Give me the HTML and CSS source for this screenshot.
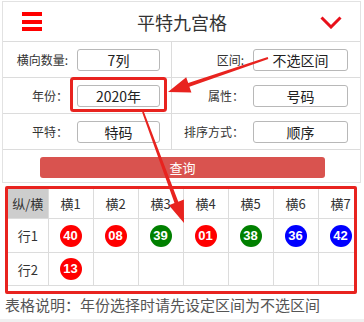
FILE: index.html
```html
<!DOCTYPE html>
<html lang="zh-CN">
<head>
  <meta charset="UTF-8" />
  <title>平特九宫格</title>
  <link rel="stylesheet" href="styles.css">
</head>
<body>
  <div class="panel">
    <div class="topbar">
      <div class="menu"><span></span><span></span><span></span></div>
      <div class="title">平特九宫格</div>
      <svg class="chevron" width="22" height="13" viewBox="0 0 22 13">
        <polyline points="1.5,1.5 11,11 20.5,1.5" fill="none" stroke="#e8101a" stroke-width="3" />
      </svg>
    </div>

    <div class="form">
      <div class="field left">
        <label>横向数量:</label>
        <div class="box">7列</div>
      </div>
      <div class="field right">
        <label>区间:</label>
        <div class="box">不选区间</div>
      </div>
      <div class="field left">
        <label>年份：</label>
        <div class="box">2020年</div>
      </div>
      <div class="field right">
        <label>属性：</label>
        <div class="box">号码</div>
      </div>
      <div class="field left">
        <label>平特：</label>
        <div class="box">特码</div>
      </div>
      <div class="field right">
        <label>排序方式：</label>
        <div class="box">顺序</div>
      </div>
    </div>

    <div class="actions">
      <button class="query">查询</button>
    </div>
  </div>

  <div class="grid-box">
    <table class="grid">
      <colgroup>
        <col class="col-head">
        <col><col><col><col><col><col><col>
      </colgroup>
      <thead>
        <tr>
          <th class="corner">纵/横</th>
          <th>横1</th>
          <th>横2</th>
          <th>横3</th>
          <th>横4</th>
          <th>横5</th>
          <th>横6</th>
          <th>横7</th>
        </tr>
      </thead>
      <tbody>
        <tr>
          <td>行1</td>
          <td><span class="ball red">40</span></td>
          <td><span class="ball red">08</span></td>
          <td><span class="ball green">39</span></td>
          <td><span class="ball red">01</span></td>
          <td><span class="ball green">38</span></td>
          <td><span class="ball blue">36</span></td>
          <td><span class="ball blue">42</span></td>
        </tr>
        <tr>
          <td>行2</td>
          <td><span class="ball red">13</span></td>
          <td></td>
          <td></td>
          <td></td>
          <td></td>
          <td></td>
          <td></td>
        </tr>
      </tbody>
    </table>
  </div>

  <p class="note">表格说明：年份选择时请先设定区间为不选区间</p>
  <div class="bottom-bar"></div>

  <!-- annotation marks drawn over the page -->
  <svg class="marks" width="364" height="322" viewBox="0 0 364 322">
    <rect x="71.5" y="78.5" width="94" height="32" rx="2" fill="none" stroke="#e8231f" stroke-width="3" />
    <polygon fill="#e8231f" points="267.7,57.1 188.2,83.0 186.2,77.3 168,92 191.4,92.5 189.4,86.8 268.3,58.9" />
    <polygon fill="#e8231f" points="142.1,112.3 174.5,203.1 168.9,205.2 184,223 183.9,199.6 178.3,201.7 143.9,111.7" />
  </svg>
</body>
</html>
```

FILE: styles.css
```css
body {
  margin: 0;
  position: relative;
  font-family: "Noto Sans CJK SC", "Microsoft YaHei", sans-serif;
  color: #333;
  background-color: white;
}

.panel {
  margin: 1px 3px 0 2px;
  border: 1px solid #e2e2e2;
}

.topbar {
  display: grid;
  grid-template-columns: 1fr auto 1fr;
  align-items: center;
  height: 39px;
  padding: 0 18px 0 19px;
  border-bottom: 1px solid #dcdcdc;
}

.menu {
  display: flex;
  flex-direction: column;
  justify-content: space-between;
  width: 20px;
  height: 19px;
}

.menu span {
  display: block;
  height: 4px;
  background-color: #f00;
}

.title {
  font-size: 18px;
  color: #333;
}

.chevron {
  justify-self: end;
  margin-top: 2px;
}

.form {
  display: grid;
  grid-template-columns: 169px 1fr;
}

.field {
  display: flex;
  align-items: center;
  gap: 9px;
  height: 35px;
  border-bottom: 1px solid #dcdcdc;
  font-size: 12px;
}

.field.left {
  border-right: 1px solid #dcdcdc;
}

.field label {
  text-align: right;
  white-space: nowrap;
}

.field.left label { width: 65px; }
.field.right label { width: 72px; }

.box {
  box-sizing: border-box;
  height: 22px;
  line-height: 20px;
  border: 1px solid #b8b8b8;
  border-radius: 3px;
  text-align: center;
  font-size: 14px;
  color: #222;
}

.field.left .box { width: 83px; }
.field.right .box { width: 95px; }

.actions {
  padding: 7px 0 4px 37px;
}

.query {
  display: block;
  width: 285px;
  height: 21px;
  padding: 0;
  border: none;
  border-radius: 3px;
  background-color: #d9534f;
  color: white;
  font-family: inherit;
  font-size: 13px;
  line-height: 21px;
}

.grid-box {
  margin: 3px 7px 0 5px;
  border: 3px solid #e8231f;
  border-radius: 2px;
  padding-bottom: 5px;
  overflow: hidden;
}

.grid {
  width: 355px;
  border-collapse: collapse;
  table-layout: fixed;
}

.grid col { width: 45px; }
.grid col.col-head { width: 40px; }

.grid th, .grid td {
  padding: 0;
  border: 1px solid #dcdcdc;
  text-align: center;
  font-size: 13px;
  font-weight: normal;
  color: #333;
}

.grid thead tr:first-child th { border-top: none; }
.grid tr > :first-child { border-left: none; }

.grid th { height: 29px; }
.grid tbody tr:first-child td { height: 33px; }
.grid tbody tr:last-child td { height: 32px; }

.grid th.corner {
  background-color: #cdcdcd;
}

.ball {
  display: inline-block;
  width: 22px;
  height: 22px;
  line-height: 22px;
  border-radius: 50%;
  color: white;
  font-family: "Liberation Sans", Arial, sans-serif;
  font-weight: bold;
  font-size: 13px;
  vertical-align: middle;
}

.ball.red { background-color: #f00; }
.ball.green { background-color: #008000; }
.ball.blue { background-color: #00f; }

.note {
  margin: 1px 0 0 5px;
  font-size: 15px;
  line-height: 20px;
  color: #555;
}

.bottom-bar {
  margin-top: 4px;
  height: 8px;
  background-color: #f0f0f0;
}

.marks {
  position: absolute;
  top: 0;
  left: 0;
  pointer-events: none;
}
```
